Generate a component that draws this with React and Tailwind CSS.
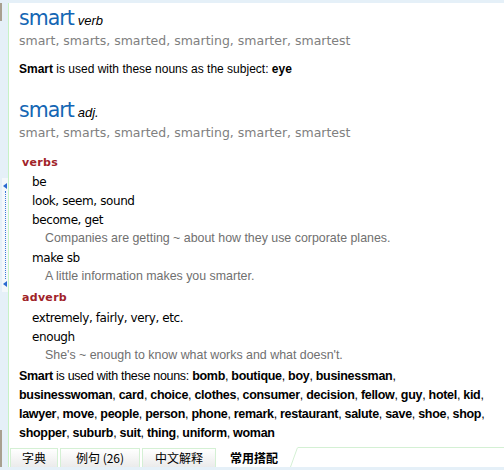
import React from 'react';

const forms = 'smart, smarts, smarted, smarting, smarter, smartest';

const nounLines = [
  ['bomb', 'boutique', 'boy', 'businessman'],
  ['businesswoman', 'card', 'choice', 'clothes', 'consumer', 'decision', 'fellow', 'guy', 'hotel', 'kid'],
  ['lawyer', 'move', 'people', 'person', 'phone', 'remark', 'restaurant', 'salute', 'save', 'shoe', 'shop'],
  ['shopper', 'suburb', 'suit', 'thing', 'uniform', 'woman'],
];

function Headword({ pos }) {
  return (
    <div>
      <div className="flex items-baseline h-[24px]">
        <span className="text-[20.5px] tracking-[-1px] text-[#1466b4] font-['DejaVu_Sans',sans-serif] leading-none">smart</span>
        <span className="ml-[4px] text-[13px] italic text-black font-['Liberation_Sans',Arial,sans-serif]">{pos}</span>
      </div>
      <div className="text-[12.5px] text-[#808080] leading-[17px] font-['DejaVu_Sans',sans-serif]">{forms}</div>
    </div>
  );
}

function Label({ children, h = 'h-[18px]' }) {
  return (
    <div className={`pl-[3px] ${h} flex items-center text-[11px] font-bold tracking-[0.3px] text-[#a02228] font-['DejaVu_Sans',sans-serif]`}>
      {children}
    </div>
  );
}

function Item({ children }) {
  return (
    <div className="pl-[13px] h-[19px] flex items-center text-[12px] tracking-[-0.4px] text-black font-['DejaVu_Sans',sans-serif]">
      {children}
    </div>
  );
}

function Example({ children }) {
  return (
    <div className="pl-[26px] h-[19px] flex items-center text-[12.4px] text-[#707070] font-['Liberation_Sans',Arial,sans-serif]">
      {children}
    </div>
  );
}

function Tab({ children, w }) {
  return (
    <div
      className={`${w} h-[19px] mr-[2px] flex items-center justify-center bg-gradient-to-b from-white to-[#ebebeb] border-x border-t border-[#d4f0d4] text-[12px] text-black`}
    >
      {children}
    </div>
  );
}

export default function App() {
  return (
    <div className="w-[504px] h-[470px] flex flex-col bg-[#e5f0f8] overflow-hidden">
      <div className="h-[3px]" />
      <div className="flex flex-1 min-h-0">
        {/* left gutter */}
        <div className="w-[8px] flex flex-col">
          <div className="w-[2px] h-[18px] bg-[#a8a090]" />
          <div className="h-[157px]" />
          <div className="ml-[2px] w-[6px] h-[114px] bg-[#f4f8fb] flex flex-col items-center justify-between py-[5px]">
            <svg width="5" height="6" viewBox="0 0 5 6"><path d="M0 3L4 0V6Z" fill="#2a6ad0" /></svg>
            <div className="flex-1 border-l border-dotted border-[#3a78d8] my-[2px]" />
            <svg width="5" height="6" viewBox="0 0 5 6"><path d="M0 3L4 0V6Z" fill="#2a6ad0" /></svg>
          </div>
          <div className="flex-1" />
          <div className="w-[2px] h-[37px] bg-[#a8a090]" />
        </div>
        <div className="w-px bg-[#c6f2c6]" />

        {/* content */}
        <div className="flex-1 bg-white flex flex-col">
          <div className="flex-1 pl-[10px] pt-[5px]">
            <Headword pos="verb" />
            <div className="mt-[13px] text-[12px] text-black font-['Liberation_Sans',Arial,sans-serif] leading-[15px]">
              <b>Smart</b> is used with these nouns as the subject: <b>eye</b>
            </div>
            <div className="mt-[23px]">
              <Headword pos="adj." />
            </div>
            <div className="mt-[13px]">
              <Label>verbs</Label>
              <Item>be</Item>
              <Item>look, seem, sound</Item>
              <Item>become, get</Item>
              <Example>Companies are getting ~ about how they use corporate planes.</Example>
              <Item>make sb</Item>
              <Example>A little information makes you smarter.</Example>
              <div className="h-[3px]" />
              <Label h="h-[19px]">adverb</Label>
              <Item>extremely, fairly, very, etc.</Item>
              <Item>enough</Item>
              <Example>She's ~ enough to know what works and what doesn't.</Example>
            </div>
            <div className="mt-[2px] text-[12.5px] leading-[19px] text-black font-['Liberation_Sans',Arial,sans-serif] tracking-[-0.3px]">
              {nounLines.map((line, i) => (
                <div key={i}>
                  {i === 0 && (
                    <>
                      <b>Smart</b> is used with these nouns:{' '}
                    </>
                  )}
                  {line.map((w, j) => (
                    <React.Fragment key={w}>
                      <b>{w}</b>
                      {j < line.length - 1 || i < nounLines.length - 1 ? ', ' : ''}
                    </React.Fragment>
                  ))}
                </div>
              ))}
            </div>
          </div>

          {/* tabs */}
          <div className="flex items-end h-[21px] pl-px font-['Noto_Sans_CJK_SC',sans-serif]">
            <Tab w="w-[48px]">字典</Tab>
            <Tab w="w-[80px]">例句 (26)</Tab>
            <Tab w="w-[74px]">中文解释</Tab>
            <div className="w-[72px] h-[19px] flex items-center justify-center bg-white text-[12px] font-bold text-black">
              常用搭配
            </div>
            <svg width="8" height="20" viewBox="0 0 8 20" className="shrink-0">
              <path d="M0.5 20L7.5 0.5" stroke="#d4f0d4" strokeWidth="1" fill="none" />
            </svg>
            <div className="flex-1 h-[20px] border-t border-[#d4f0d4]" />
          </div>
        </div>
      </div>
      <div className="h-[3px]" />
    </div>
  );
}
